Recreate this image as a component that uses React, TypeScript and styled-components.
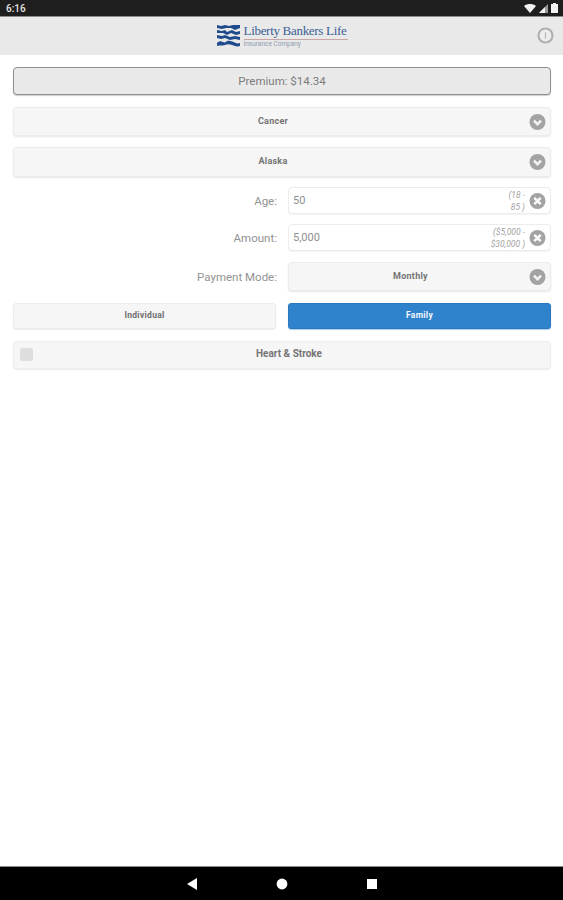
import React from "react";
import styled, { createGlobalStyle } from "styled-components";

const GlobalStyle = createGlobalStyle`
  html, body { margin: 0; padding: 0; background: #fff; }
  body { font-family: Roboto, "Liberation Sans", Arial, sans-serif; }
  * { box-sizing: border-box; }
`;

const Screen = styled.div`
  width: 563px;
  height: 900px;
  display: flex;
  flex-direction: column;
  overflow: hidden;
`;

const StatusBar = styled.div`
  height: 16px;
  background: #1e1e1e;
  color: #e4e4e4;
  font-size: 10px;
  font-weight: 500;
  padding: 0 5px 0 6px;
  display: flex;
  align-items: center;
  justify-content: space-between;
  flex: none;
`;

const StatusIcons = styled.div`
  display: flex;
  align-items: center;
  gap: 3px;
`;

const Header = styled.div`
  height: 39px;
  flex: none;
  background: #e9e9e9;
  border-top: 1px solid #8a8a8a;
  position: relative;
  display: flex;
  align-items: center;
  justify-content: center;
`;

const Logo = styled.div`
  display: flex;
  align-items: center;
  gap: 3px;
  margin-left: 1px;
`;

const LogoText = styled.div`
  display: flex;
  flex-direction: column;
  width: 104px;
`;

const LogoName = styled.div`
  font-family: "Liberation Serif", serif;
  font-size: 13px;
  line-height: 14px;
  letter-spacing: -0.3px;
  color: #3a5f94;
  white-space: nowrap;
  padding-bottom: 1px;
  border-bottom: 1px solid #c9a5a5;
`;

const LogoSub = styled.div`
  font-size: 6.5px;
  line-height: 9px;
  color: #8d9bb0;
  white-space: nowrap;
`;

const InfoButton = styled.svg`
  position: absolute;
  right: 9px;
  top: 10px;
  width: 17px;
  height: 17px;
`;

const Content = styled.div`
  flex: 1;
  display: flex;
  flex-direction: column;
  padding: 12px 12px 0 13px;
`;

const Premium = styled.div`
  height: 28px;
  background: #e9e9e9;
  border: 1px solid #8f8f8f;
  border-radius: 4px;
  box-shadow: 0 1px 1px rgba(0, 0, 0, 0.2);
  display: flex;
  align-items: center;
  justify-content: center;
  color: #7c7c7c;
  font-size: 11.5px;
  margin-bottom: 12px;
`;

const SelectBox = styled.div<{ $h?: number; $mb?: number; $grow?: boolean }>`
  height: ${(p) => p.$h ?? 29}px;
  margin-bottom: ${(p) => p.$mb ?? 11}px;
  background: #f6f6f6;
  border: 1px solid #ececec;
  border-radius: 4px;
  box-shadow: 0 1px 2px rgba(0, 0, 0, 0.1);
  position: relative;
  display: flex;
  align-items: center;
  justify-content: center;
  padding: 0 18px 2px 0;
  color: #747474;
  font-size: 9px;
  font-weight: 700;
  letter-spacing: 0.25px;
  flex: ${(p) => (p.$grow ? 1 : "none")};
`;

const CircleIcon = styled.svg<{ $right?: number }>`
  position: absolute;
  right: ${(p) => p.$right ?? 4}px;
  top: 50%;
  transform: translateY(-50%);
  width: 17px;
  height: 17px;
`;

const FieldRow = styled.div<{ $mb?: number }>`
  display: flex;
  align-items: center;
  margin-bottom: ${(p) => p.$mb ?? 10}px;
`;

const FieldLabel = styled.div`
  width: 264px;
  flex: none;
  text-align: right;
  color: #929292;
  font-size: 11.5px;
  margin-right: 11px;
  padding-top: 1px;
`;

const InputBox = styled.div`
  flex: 1;
  height: 27px;
  background: #fff;
  border: 1px solid #ececec;
  border-radius: 4px;
  box-shadow: 0 1px 1px rgba(0, 0, 0, 0.05);
  position: relative;
  display: flex;
  align-items: center;
  padding-left: 4px;
  color: #909090;
  font-size: 11px;
`;

const RangeHint = styled.div<{ $w: number }>`
  position: absolute;
  right: 25px;
  top: 50%;
  transform: translateY(-50%);
  width: ${(p) => p.$w}px;
  font-style: italic;
  font-size: 8.5px;
  line-height: 12px;
  color: #a2a2a2;
  text-align: right;
`;

const ToggleRow = styled.div`
  display: grid;
  grid-template-columns: 263px 263px;
  column-gap: 12px;
  margin-bottom: 12px;
`;

const ToggleButton = styled.div<{ $active?: boolean }>`
  height: 26px;
  border-radius: 3px;
  display: flex;
  align-items: center;
  justify-content: center;
  padding-bottom: 2px;
  font-size: 8.5px;
  font-weight: 700;
  letter-spacing: 0.3px;
  background: ${(p) => (p.$active ? "#2f83cc" : "#f6f6f6")};
  color: ${(p) => (p.$active ? "#f4f8fc" : "#6e6e6e")};
  border: 1px solid ${(p) => (p.$active ? "#2a78bd" : "#ececec")};
  box-shadow: ${(p) => (p.$active ? "0 1px 1px rgba(47,131,204,0.4)" : "0 1px 1px rgba(0,0,0,0.08)")};
`;

const CheckRow = styled.div`
  height: 28px;
  background: #f6f6f6;
  border: 1px solid #eeeeee;
  border-radius: 4px;
  box-shadow: 0 1px 1px rgba(0, 0, 0, 0.08);
  position: relative;
  display: flex;
  align-items: center;
  justify-content: center;
  padding: 0 0 3px 14px;
  color: #747474;
  font-size: 10px;
  font-weight: 700;
`;

const CheckBox = styled.div`
  position: absolute;
  left: 6px;
  top: 6px;
  width: 13px;
  height: 13px;
  border-radius: 2px;
  background: #dedede;
`;

const NavBar = styled.div`
  height: 34px;
  flex: none;
  background: #000;
  border-top: 1px solid #8a8a8a;
  display: flex;
  align-items: center;
  justify-content: center;
  gap: 78px;
`;

const NavIcon = styled.svg`
  width: 12px;
  height: 12px;
  fill: #fff;
`;

const Chevron = () => (
  <CircleIcon viewBox="0 0 17 17">
    <circle cx="8.5" cy="8.5" r="8" fill="#a3a3a3" />
    <path d="M5 7.2 8.5 10.7 12 7.2" fill="none" stroke="#f4f4f4" strokeWidth="2.6" />
  </CircleIcon>
);

const Clear = () => (
  <CircleIcon viewBox="0 0 17 17" $right={4}>
    <circle cx="8.5" cy="8.5" r="8" fill="#a3a3a3" />
    <path d="M5.3 5.3 11.7 11.7M11.7 5.3 5.3 11.7" fill="none" stroke="#fafafa" strokeWidth="2.6" />
  </CircleIcon>
);

// flag mark, waving stripes
const LogoMark = () => (
  <svg width="24" height="24" viewBox="0 0 24 24">
    <g fill="#1f4a8c">
      <path d="M0 1 4 2 8 1 12 2 16 1 23 1V4L18 6 14 4 9 4 5 5 0 4z" />
      <path d="M0 6 5 7 8 6 10 8 15 6 19 8 23 7V10L19 11 14 9 10 11 6 9 0 9z" />
      <path d="M0 11 5 12 8 11 13 13 18 12 23 13V16L18 15 13 16 8 14 4 15 0 14z" />
      <path d="M0 19C2 17 4 17 6 18 8 19 9 18 10 17 13 16 16 18 19 19 21 20 22 19 23 19V22C20 23 18 22 15 21 12 20 10 20 8 21 5 22 3 21 0 22z" />
    </g>
  </svg>
);

export default function App() {
  return (
    <>
      <GlobalStyle />
      <Screen>
        <StatusBar>
          <span>6:16</span>
          <StatusIcons>
            <svg width="12" height="9" viewBox="0 0 12 9">
              <path d="M0 2C3.5 -0.6 8.5 -0.6 12 2L6 9z" fill="#f2f2f2" />
            </svg>
            <svg width="9" height="9" viewBox="0 0 9 9">
              <path d="M9 0V9H0z" fill="#9a9a9a" />
              <path d="M6 3V9H0z" fill="#f2f2f2" />
            </svg>
            <svg width="7" height="10" viewBox="0 0 7 10">
              <path d="M2 0h3v1h2v9H0V1h2z" fill="#f2f2f2" />
            </svg>
          </StatusIcons>
        </StatusBar>
        <Header>
          <Logo>
            <LogoMark />
            <LogoText>
              <LogoName>Liberty Bankers Life</LogoName>
              <LogoSub>Insurance Company</LogoSub>
            </LogoText>
          </Logo>
          <InfoButton viewBox="0 0 17 17">
            <circle cx="8.5" cy="8.5" r="7" fill="#eeeeee" stroke="#b0b0b0" strokeWidth="2.2" />
            <path d="M8.5 5.4V11.6" stroke="#bdbdbd" strokeWidth="1.4" />
          </InfoButton>
        </Header>
        <Content>
          <Premium>Premium: $14.34</Premium>
          <SelectBox>
            Cancer
            <Chevron />
          </SelectBox>
          <SelectBox $h={30} $mb={10}>
            Alaska
            <Chevron />
          </SelectBox>
          <FieldRow>
            <FieldLabel>Age:</FieldLabel>
            <InputBox>
              50
              <RangeHint $w={20}>(18 - 85 )</RangeHint>
              <Clear />
            </InputBox>
          </FieldRow>
          <FieldRow $mb={11}>
            <FieldLabel>Amount:</FieldLabel>
            <InputBox>
              5,000
              <RangeHint $w={40}>($5,000 - $30,000 )</RangeHint>
              <Clear />
            </InputBox>
          </FieldRow>
          <FieldRow $mb={12}>
            <FieldLabel>Payment Mode:</FieldLabel>
            <SelectBox $mb={0} $grow>
              Monthly
              <Chevron />
            </SelectBox>
          </FieldRow>
          <ToggleRow>
            <ToggleButton>Individual</ToggleButton>
            <ToggleButton $active>Family</ToggleButton>
          </ToggleRow>
          <CheckRow>
            <CheckBox />
            Heart &amp; Stroke
          </CheckRow>
        </Content>
        <NavBar>
          <NavIcon viewBox="0 0 12 12">
            <path d="M11 0V12L1 6z" />
          </NavIcon>
          <NavIcon viewBox="0 0 12 12">
            <circle cx="6" cy="6" r="5.4" />
          </NavIcon>
          <NavIcon viewBox="0 0 12 12">
            <rect x="1" y="1" width="10" height="10" />
          </NavIcon>
        </NavBar>
      </Screen>
    </>
  );
}
